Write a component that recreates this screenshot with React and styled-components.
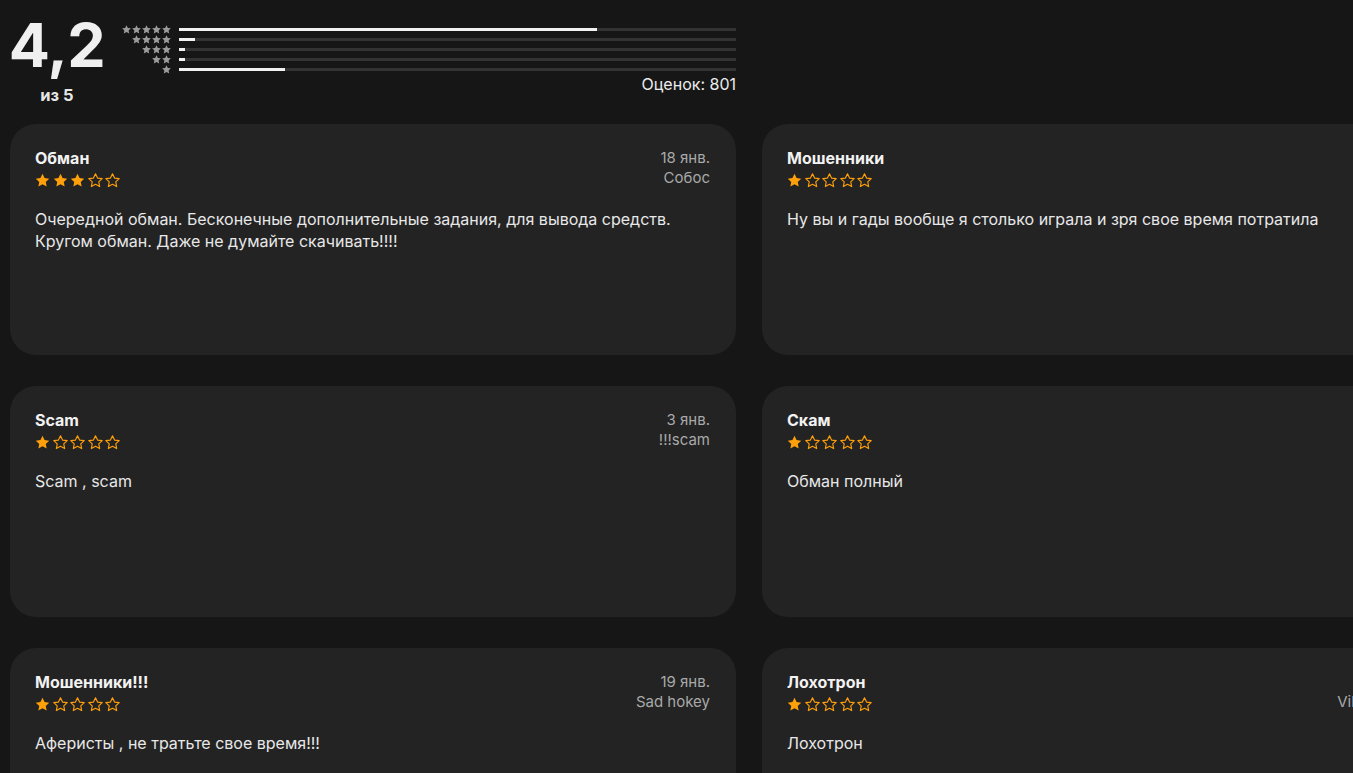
import React from 'react';
import styled, { createGlobalStyle } from 'styled-components';

const GlobalStyle = createGlobalStyle`
  html, body {
    margin: 0;
    padding: 0;
    background: #161616;
    overflow: hidden;
  }
  body {
    font-family: Inter, "Noto Sans", "Liberation Sans", sans-serif;
    color: #f2f2f2;
  }
`

const distribution = [
  { stars: 5, value: 75 },
  { stars: 4, value: 2.9 },
  { stars: 3, value: 1.1 },
  { stars: 2, value: 1.1 },
  { stars: 1, value: 19 },
];

const reviews = [
  { title: 'Обман', rating: 3, date: '18 янв.', author: 'Собос', text: 'Очередной обман. Бесконечные дополнительные задания, для вывода средств. Кругом обман. Даже не думайте скачивать!!!!' },
  { title: 'Мошенники', rating: 1, date: '12 янв.', author: 'Ирина', text: 'Ну вы и гады вообще я столько играла и зря свое время потратила' },
  { title: 'Scam', rating: 1, date: '3 янв.', author: '!!!scam', text: 'Scam , scam' },
  { title: 'Скам', rating: 1, date: '2 янв.', author: 'Дмитрий', text: 'Обман полный' },
  { title: 'Мошенники!!!', rating: 1, date: '19 янв.', author: 'Sad hokey', text: 'Аферисты , не тратьте свое время!!!' },
  { title: 'Лохотрон', rating: 1, date: '20 янв.', author: 'Viktoria Smirnova', text: 'Лохотрон' },
];

const STAR = 'M12 2.5l2.9 6.1 6.6.8-4.9 4.6 1.3 6.6L12 17.3l-5.9 3.3 1.3-6.6-4.9-4.6 6.6-.8z';

const Star = ({ filled, size, color }) => (
  <svg width={size} height={size} viewBox="0 0 24 24">
    <path
      d={STAR}
      fill={filled ? color : 'none'}
      stroke={color}
      strokeWidth={filled ? 0 : 1.6}
      strokeLinejoin="round"
    />
  </svg>
);

export default function App() {
  return (
    <Page>
      <GlobalStyle />
      <Summary>
        <Score>
          <Big>4,2</Big>
          <OutOf>из 5</OutOf>
        </Score>
        <Histogram>
          {distribution.map(row => (
            <HistRow key={row.stars}>
              <MiniStars>
                {Array.from({ length: row.stars }).map((_, i) => (
                  <Star key={i} filled size={11} color="#9b9b9b" />
                ))}
              </MiniStars>
              <Track>
                <Fill style={{ width: `${row.value}%` }} />
              </Track>
            </HistRow>
          ))}
          <Count>Оценок: 801</Count>
        </Histogram>
      </Summary>

      <Grid>
        {reviews.map((r, idx) => (
          <Card key={idx}>
            <Head>
              <div>
                <Title>{r.title}</Title>
                <Stars>
                  {[1, 2, 3, 4, 5].map(n => (
                    <Star key={n} filled={n <= r.rating} size={17} color="#ff9f0a" />
                  ))}
                </Stars>
              </div>
              <Meta>
                <MetaLine>{r.date}</MetaLine>
                <MetaLine>{r.author}</MetaLine>
              </Meta>
            </Head>
            <Body>{r.text}</Body>
          </Card>
        ))}
      </Grid>
    </Page>
  );
}

const Page = styled.div`
  padding: 10px 10px 0 10px;
  width: 1600px;
`
const Summary = styled.div`
  display: flex;
  width: 726px;
  height: 104px;
`
const Score = styled.div`
  width: 94px;
  display: flex;
  flex-direction: column;
  align-items: center;
`
const Big = styled.div`
  font-size: 61px;
  font-weight: 700;
  line-height: 70px;
  letter-spacing: -0.5px;
  color: #f0f0f0;
`
const OutOf = styled.div`
  font-size: 16.5px;
  font-weight: 700;
  line-height: 20px;
  margin-top: 5px;
  color: #e6e6e6;
`
const Histogram = styled.div`
  flex: 1;
  padding-top: 14px;
  margin-left: 16px;
  display: flex;
  flex-direction: column;
`
const HistRow = styled.div`
  display: flex;
  align-items: center;
  height: 10px;
`
const MiniStars = styled.div`
  width: 52px;
  display: flex;
  justify-content: flex-end;
  margin-right: 7px;
  & svg {
    margin-left: -1px;
  }
`
const Track = styled.div`
  flex: 1;
  height: 3px;
  background: #333333;
`
const Fill = styled.div`
  height: 100%;
  background: #f2f2f2;
`
const Count = styled.div`
  text-align: right;
  font-size: 16px;
  line-height: 20px;
  color: #ececec;
`
const Grid = styled.div`
  display: grid;
  grid-template-columns: 726px 726px;
  column-gap: 26px;
  row-gap: 31px;
  margin-top: 10px;
`
const Card = styled.div`
  height: 231px;
  box-sizing: border-box;
  padding: 24px 26px 24px 25px;
  background: #232323;
  border-radius: 26px;
`
const Head = styled.div`
  display: flex;
  justify-content: space-between;
  align-items: flex-start;
`
const Title = styled.div`
  font-size: 16px;
  font-weight: 700;
  line-height: 20px;
  color: #f2f2f2;
`
const Stars = styled.div`
  display: flex;
  gap: 0.6px;
  margin-top: 4px;
  margin-left: -1px;
`
const Meta = styled.div`
  text-align: right;
`
const MetaLine = styled.div`
  font-size: 15px;
  line-height: 20px;
  color: #a9a9a9;
`
const Body = styled.div`
  margin-top: 19px;
  font-size: 16px;
  line-height: 22px;
  color: #e8e8e8;
`
